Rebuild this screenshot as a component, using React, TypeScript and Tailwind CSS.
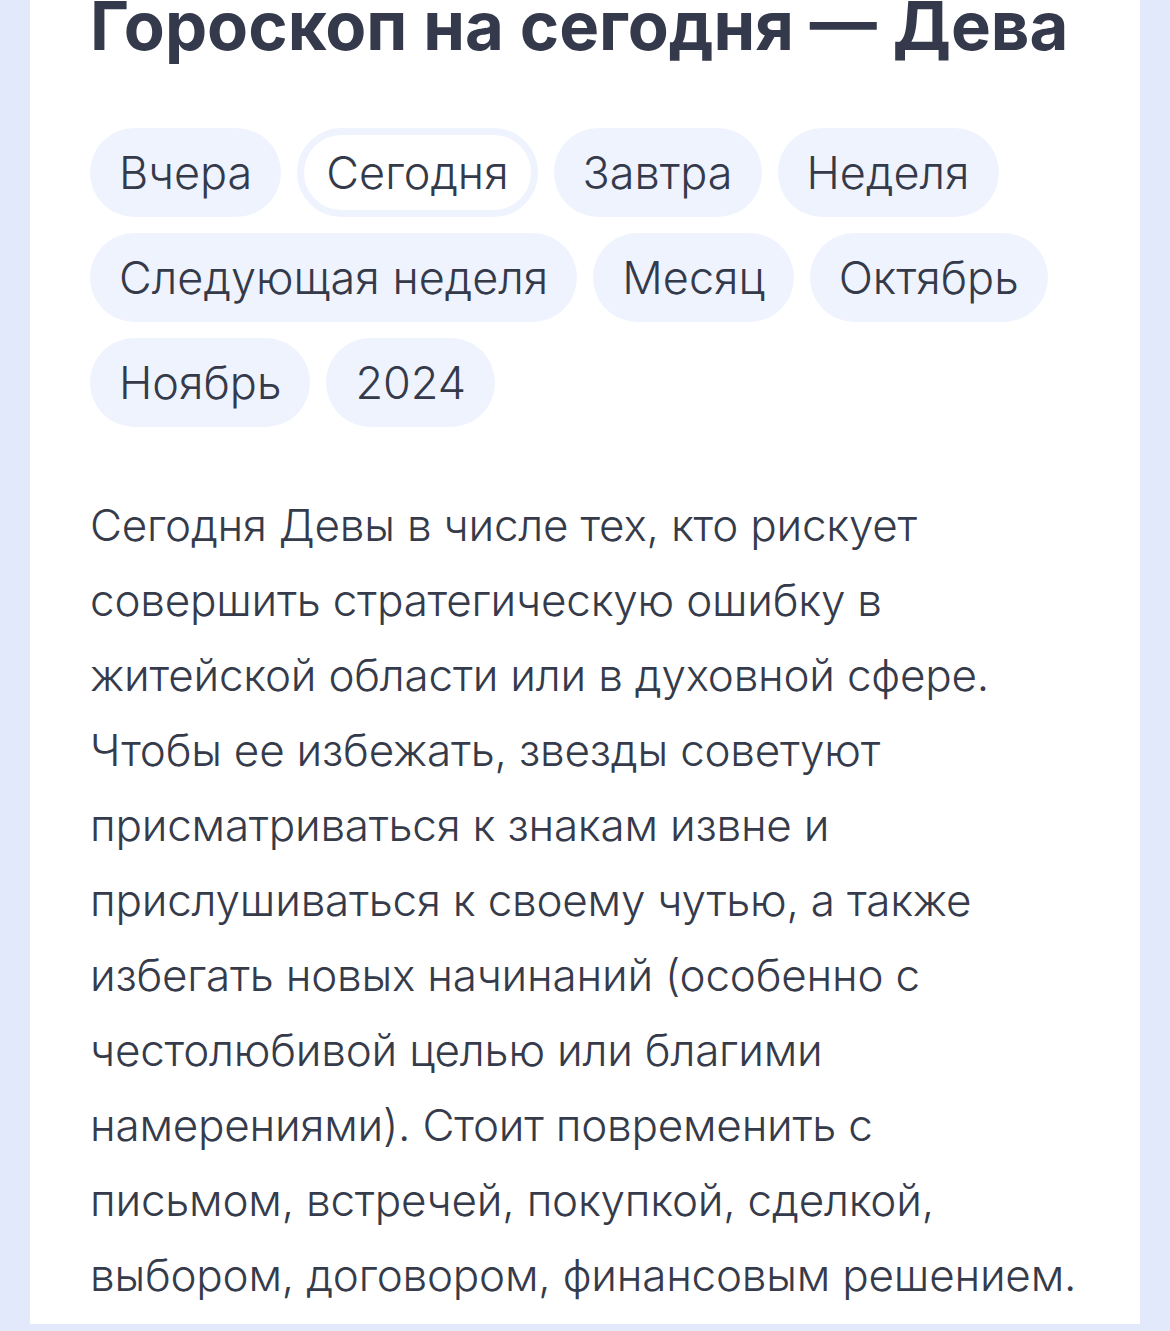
const periods = [
  { label: "Вчера" },
  { label: "Сегодня", active: true },
  { label: "Завтра" },
  { label: "Неделя" },
  { label: "Следующая неделя" },
  { label: "Месяц" },
  { label: "Октябрь" },
  { label: "Ноябрь" },
  { label: "2024" },
];

const App = () => {
  return (
    <div className="min-h-[1331px] bg-[#e1e9fb] px-[30px] overflow-hidden" style={{ fontFamily: "Inter, 'Noto Sans', sans-serif" }}>
      <div className="bg-white min-h-[1331px] px-[60px] text-[#353a4a]">
        {/* title */}
        <h1 className="mt-[-7px] text-[67px] leading-[66px] font-bold whitespace-nowrap text-[#343a4b]">
          Гороскоп на сегодня — Дева
        </h1>

        {/* period pills */}
        <div className="mt-[69px] flex flex-wrap gap-4">
          {periods.map((p) =>
            p.active ? (
              <span
                key={p.label}
                className="h-[89px] flex items-center rounded-full border-[7px] border-[#eef3fe] bg-white px-[22px] text-[45px] font-light"
              >
                {p.label}
              </span>
            ) : (
              <span
                key={p.label}
                className="h-[89px] flex items-center rounded-full bg-[#eef3fe] px-[29px] text-[45px] font-light"
              >
                {p.label}
              </span>
            )
          )}
        </div>

        {/* horoscope text */}
        <p className="mt-[61px] text-[44px] leading-[75px] tracking-[-0.005em] font-light text-[#363b4b]">
          Сегодня Девы в числе тех, кто рискует совершить стратегическую ошибку в житейской области или в духовной сфере. Чтобы ее избежать, звезды советуют присматриваться к знакам извне и прислушиваться к своему чутью, а также избегать новых начинаний (особенно с честолюбивой целью или благими намерениями). Стоит повременить с письмом, встречей, покупкой, сделкой, выбором, договором, финансовым решением.
        </p>
      </div>
    </div>
  );
};

export default App;
